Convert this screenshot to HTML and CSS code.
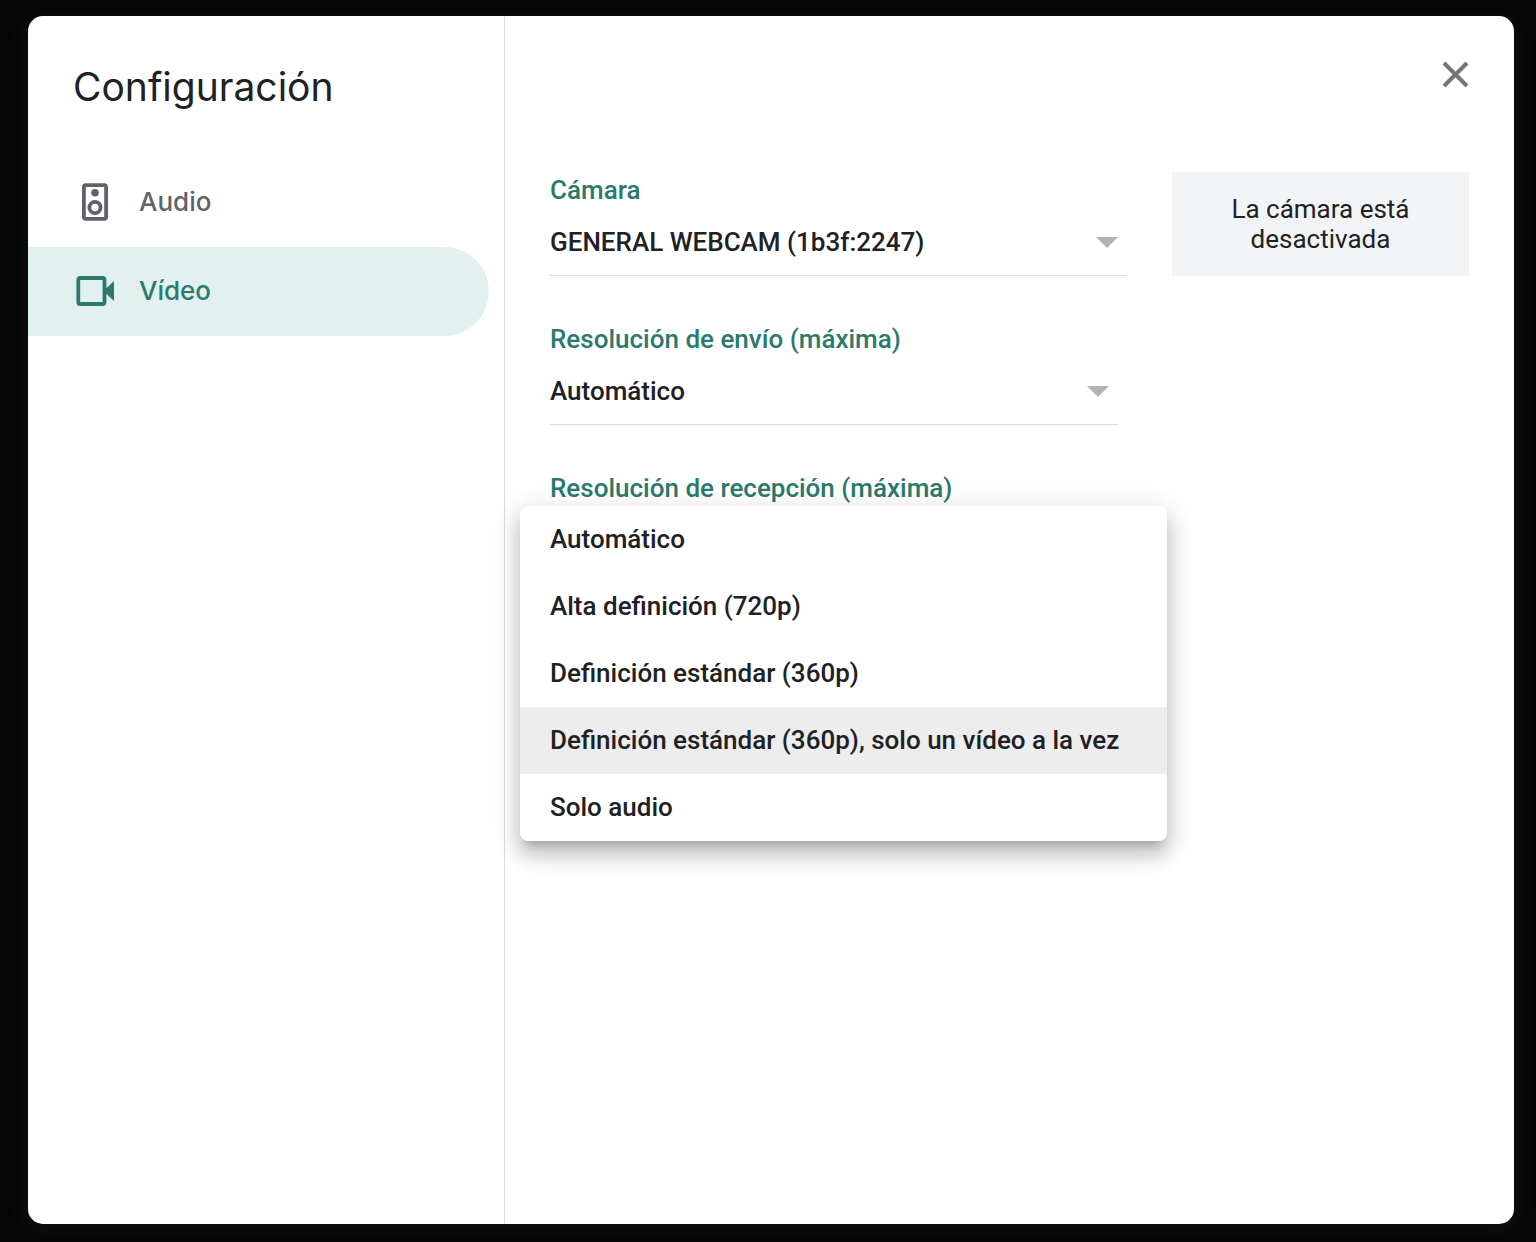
FILE: index.html
```html
<!DOCTYPE html>
<html lang="es">
<head>
  <meta charset="utf-8">
  <meta name="viewport" content="width=device-width, initial-scale=1">
  <title>Configuración</title>
  <link rel="stylesheet" href="styles.css">
</head>
<body>
  <main class="dialog" role="dialog" aria-labelledby="dialog-title">
    <aside class="sidebar">
      <h1 class="title" id="dialog-title">Configuración</h1>
      <nav class="tabs">
        <button class="tab" type="button">
          <svg class="tab-icon" viewBox="0 0 44 44" aria-hidden="true">
            <rect x="10.9" y="5.2" width="22.2" height="33.6" rx="2" fill="none" stroke="currentColor" stroke-width="3.8"/>
            <circle cx="22" cy="12.8" r="3.8" fill="currentColor"/>
            <circle cx="22" cy="27.5" r="5.6" fill="none" stroke="currentColor" stroke-width="3.8"/>
          </svg>
          <span>Audio</span>
        </button>
        <button class="tab tab-active" type="button" aria-current="page">
          <svg class="tab-icon" viewBox="0 0 44 44" aria-hidden="true">
            <rect x="5.3" y="9" width="26.2" height="26" rx="2" fill="none" stroke="currentColor" stroke-width="3.8"/>
            <path d="M32 20.5 41 12v20l-9-8.500z" fill="currentColor"/>
          </svg>
          <span>Vídeo</span>
        </button>
      </nav>
    </aside>

    <section class="content">
      <header class="content-header">
        <button class="close" type="button" aria-label="Cerrar">
          <svg class="close-icon" viewBox="0 0 27 27" aria-hidden="true">
            <path d="M2 2l23 23M25 2l-23 23" stroke="currentColor" stroke-width="4"/>
          </svg>
        </button>
      </header>

      <div class="fields">
        <div class="camera-row">
          <div class="field">
            <label class="label" for="camera">Cámara</label>
            <div class="select-box">
              <select class="select" id="camera">
                <option>GENERAL WEBCAM (1b3f:2247)</option>
              </select>
              <svg class="arrow" viewBox="0 0 22 11" aria-hidden="true"><path d="M0 0h22L11 11z" fill="currentColor"/></svg>
            </div>
          </div>
          <p class="preview">La cámara está desactivada</p>
        </div>

        <div class="field field-narrow">
          <label class="label" for="send">Resolución de envío (máxima)</label>
          <div class="select-box">
            <select class="select" id="send">
              <option>Automático</option>
            </select>
            <svg class="arrow" viewBox="0 0 22 11" aria-hidden="true"><path d="M0 0h22L11 11z" fill="currentColor"/></svg>
          </div>
        </div>

        <div class="field field-narrow">
          <label class="label" for="receive">Resolución de recepción (máxima)</label>
          <div class="menu-anchor">
            <select class="menu" id="receive" size="5">
              <option class="menu-item">Automático</option>
              <option class="menu-item">Alta definición (720p)</option>
              <option class="menu-item">Definición estándar (360p)</option>
              <option class="menu-item" selected>Definición estándar (360p), solo un vídeo a la vez</option>
              <option class="menu-item">Solo audio</option>
            </select>
          </div>
        </div>
      </div>
    </section>
  </main>
</body>
</html>
```
FILE: styles.css
```css
* {
  box-sizing: border-box;
}

body {
  margin: 0;
  min-height: 100vh;
  padding: 16px 22px 18px 28px;
  display: flex;
  background: #060606;
  color: #202124;
  font: 500 26px/30px Roboto, sans-serif;
}

button,
select {
  margin: 0;
  border: 0;
  padding: 0;
  background: none;
  color: inherit;
  font: inherit;
}

.dialog {
  flex: 1;
  display: flex;
  border-radius: 15px;
  background: #fff;
  box-shadow: 0 4px 20px 4px #0d0f0f;
}

/* Sidebar */

.sidebar {
  flex: none;
  width: 477px;
  border-right: 1px solid #dadce0;
}

.title {
  margin: 0;
  height: 142px;
  padding: 45px 45px 0;
  font: 400 39px/52px Inter, sans-serif;
}

.tabs {
  display: flex;
  flex-direction: column;
  padding-right: 15px;
}

.tab {
  display: flex;
  align-items: center;
  gap: 22px;
  height: 89px;
  padding: 0 0 2px 45px;
  border-radius: 0 45px 45px 0;
  color: #5f6368;
  font-family: Inter, sans-serif;
}

.tab-active {
  background: #e2f0ef;
  color: #2b7a6b;
}

.tab-icon {
  width: 44px;
  height: 44px;
}

/* Content */

.content {
  flex: 1;
  min-width: 0;
  padding: 45px 45px 45px 44px;
}

.content-header {
  display: flex;
  justify-content: flex-end;
  align-items: flex-start;
  height: 111px;
}

.close {
  color: #757575;
}

.close-icon {
  display: block;
  width: 27px;
  height: 27px;
}

.fields {
  display: flex;
  flex-direction: column;
  gap: 45px;
}

.camera-row {
  display: flex;
  gap: 45px;
}

.field {
  flex: 1;
}

.field-narrow {
  width: 569px;
  max-width: 100%;
}

.label {
  display: block;
  padding-left: 1px;
  color: #2b7a6b;
  line-height: 36px;
}

.select-box {
  display: grid;
  align-items: center;
  border-bottom: 1px solid #dadce0;
}

.select {
  grid-area: 1 / 1;
  width: 100%;
  height: 67px;
  padding-left: 1px;
  appearance: none;
}

.arrow {
  grid-area: 1 / 1;
  justify-self: end;
  width: 22px;
  height: 11px;
  margin: 2px 9px 0 0;
  color: #b3b3b3;
  pointer-events: none;
}

.preview {
  flex: none;
  width: 297px;
  margin: 0;
  padding: 22px 45px;
  background: #f1f3f4;
  font-weight: 400;
  text-align: center;
}

/* Open list of the receive resolution */

.menu-anchor {
  position: relative;
}

.menu {
  position: absolute;
  top: 0;
  left: -29px;
  width: 647px;
  height: 335px;
  border-radius: 8px;
  overflow: hidden;
  background: #fff;
  outline: 0;
  box-shadow:
    0 9px 9px -6px rgba(0, 0, 0, 0.2),
    0 15px 19px 2px rgba(0, 0, 0, 0.14),
    0 6px 26px 4px rgba(0, 0, 0, 0.12);
}

.menu-item {
  display: flex;
  align-items: center;
  height: 67px;
  padding: 0 30px 2px;
  font-weight: 500;
}

.menu-item:checked {
  background: #ededed linear-gradient(#ededed, #ededed);
  color: #202124;
}
```
